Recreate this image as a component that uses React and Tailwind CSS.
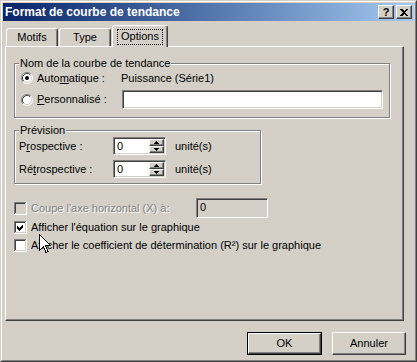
import React from "react";

const raised =
  "border border-t-white border-l-white border-r-[#404040] border-b-[#404040] shadow-[inset_-1px_-1px_0_#808080]";
const sunken =
  "border border-t-[#808080] border-l-[#808080] border-r-white border-b-white shadow-[inset_1px_1px_0_#404040,inset_-1px_-1px_0_#d4d0c8]";
const etched =
  "border border-[#808080] shadow-[1px_1px_0_white,inset_1px_1px_0_white]";

const Radio = ({ checked }) => (
  <svg width="12" height="12" viewBox="0 0 12 12" className="shrink-0">
    <circle cx="6" cy="6" r="5" fill="white" />
    <path d="M2.11 9.89 A5.5 5.5 0 0 1 9.89 2.11" fill="none" stroke="#808080" />
    <path d="M9.89 2.11 A5.5 5.5 0 0 1 2.11 9.89" fill="none" stroke="white" />
    <path d="M2.82 9.18 A4.5 4.5 0 0 1 9.18 2.82" fill="none" stroke="#404040" />
    <path d="M9.18 2.82 A4.5 4.5 0 0 1 2.82 9.18" fill="none" stroke="#d4d0c8" />
    {checked && <circle cx="6" cy="6" r="2" fill="black" />}
  </svg>
);

const Check = ({ checked, disabled }) => (
  <svg width="13" height="13" viewBox="0 0 13 13" shapeRendering="crispEdges" className="shrink-0">
    <rect x="0" y="0" width="13" height="13" fill={disabled ? "#d4d0c8" : "white"} />
    <rect x="0" y="0" width="12" height="1" fill="#808080" />
    <rect x="0" y="0" width="1" height="12" fill="#808080" />
    <rect x="1" y="1" width="10" height="1" fill="#404040" />
    <rect x="1" y="1" width="1" height="10" fill="#404040" />
    <rect x="0" y="12" width="13" height="1" fill="white" />
    <rect x="12" y="0" width="1" height="13" fill="white" />
    <rect x="1" y="11" width="11" height="1" fill="#d4d0c8" />
    <rect x="11" y="1" width="1" height="11" fill="#d4d0c8" />
    {checked && <path d="M3 5 L5 7 L9 3 L9 6 L5 10 L3 8 Z" fill="black" />}
  </svg>
);

const Arrow = ({ up }) => (
  <svg width="5" height="3" viewBox="0 0 5 3" shapeRendering="crispEdges">
    <path d={up ? "M2.5 0 L5 3 L0 3 Z" : "M0 0 L5 0 L2.5 3 Z"} fill="black" />
  </svg>
);

const Spin = () => (
  <div className={`flex w-[53px] h-[18px] bg-white ${sunken} p-[1px]`}>
    <span className="flex-1 pl-[2px] leading-[14px]">0</span>
    <div className="flex flex-col w-[15px]">
      <div className={`h-[7px] flex items-center justify-center bg-[#d4d0c8] ${raised}`}>
        <Arrow up />
      </div>
      <div className={`h-[7px] flex items-center justify-center bg-[#d4d0c8] ${raised}`}>
        <Arrow />
      </div>
    </div>
  </div>
);

const Tab = ({ label, width, selected }) => (
  <div
    className={`flex items-center justify-center rounded-t-[3px] border-t border-l border-r border-t-white border-l-white border-r-[#404040] shadow-[inset_-1px_0_0_#808080] bg-[#d4d0c8] ${width} ${
      selected ? "h-[22px] -mb-[1px] relative z-10" : "h-[18px]"
    }`}
  >
    {selected ? (
      <span className="h-[16px] flex items-center border border-dotted border-black px-[3px]">{label}</span>
    ) : (
      <span>{label}</span>
    )}
  </div>
);

export default function App() {
  return (
    <div className="relative w-[417px] h-[362px] bg-[#d4d0c8] border border-t-[#d4d0c8] border-l-[#d4d0c8] border-r-[#404040] border-b-[#404040] font-['Liberation_Sans',Arial,sans-serif] text-[11px] text-black select-none">
      <div className="h-full border border-t-white border-l-white border-r-[#808080] border-b-[#808080] p-[1px] flex flex-col">
        {/* title bar */}
        <div className="h-[18px] flex items-center bg-gradient-to-r from-[#0a246a] to-[#a6caf0] pl-[2px] pr-[2px]">
          <span className="flex-1 text-white font-bold text-[12px] leading-none">Format de courbe de tendance</span>
          <div className={`w-[16px] h-[14px] flex items-center justify-center bg-[#d4d0c8] ${raised} font-bold text-[11px] leading-none`}>
            ?
          </div>
          <div className={`ml-[2px] w-[16px] h-[14px] flex items-center justify-center bg-[#d4d0c8] ${raised}`}>
            <svg width="8" height="7" viewBox="0 0 8 7" shapeRendering="crispEdges">
              <path d="M0 0 L2 0 L4 2 L6 0 L8 0 L5 3.5 L8 7 L6 7 L4 5 L2 7 L0 7 L3 3.5 Z" fill="black" />
            </svg>
          </div>
        </div>

        <div className="flex flex-col pl-[2px] pt-[4px]">
          {/* tabs */}
          <div className="flex items-end h-[21px] pl-[1px] gap-[1px] relative z-10">
            <Tab label="Motifs" width="w-[52px]" />
            <Tab label="Type" width="w-[52px]" />
            <Tab label="Options" width="w-[56px]" selected />
          </div>

          {/* panel */}
          <div className="w-[399px] h-[275px] border border-t-white border-l-white border-r-[#404040] border-b-[#404040] shadow-[inset_-1px_-1px_0_#808080] flex flex-col pl-[8px]">
            {/* group 1 */}
            <div className={`relative mt-[16px] w-[376px] h-[55px] ${etched} pl-[6px]`}>
              <span className="absolute -top-[7px] left-[4px] bg-[#d4d0c8] px-[1px] leading-[13px]">
                Nom de la courbe de tendance
              </span>
              <div className="mt-[6px] h-[16px] flex items-center">
                <div className="w-[100px] flex items-center gap-[4px]">
                  <Radio checked />
                  <span>
                    Auto<u>m</u>atique :
                  </span>
                </div>
                <span>Puissance (Série1)</span>
              </div>
              <div className="mt-[4px] h-[19px] flex items-center">
                <div className="w-[101px] flex items-center gap-[4px]">
                  <Radio />
                  <span>
                    <u>P</u>ersonnalisé :
                  </span>
                </div>
                <div className={`w-[261px] h-[19px] bg-white ${sunken}`} />
              </div>
            </div>

            {/* group 2 */}
            <div className={`relative mt-[12px] w-[247px] h-[54px] ${etched} pl-[4px]`}>
              <span className="absolute -top-[7px] left-[4px] bg-[#d4d0c8] px-[1px] leading-[13px]">Prévision</span>
              <div className="mt-[6px] flex items-center">
                <span className="w-[94px]">
                  P<u>r</u>ospective :
                </span>
                <Spin />
                <span className="ml-[9px]">unité(s)</span>
              </div>
              <div className="mt-[5px] flex items-center">
                <span className="w-[94px]">
                  Ré<u>t</u>rospective :
                </span>
                <Spin />
                <span className="ml-[9px]">unité(s)</span>
              </div>
            </div>

            {/* checkboxes */}
            <div className="mt-[14px] h-[20px] flex items-center">
              <div className="w-[182px] flex items-center gap-[4px]">
                <Check disabled />
                <span className="text-[#808080] [text-shadow:1px_1px_0_white]">Coupe l'axe horizontal (X) à:</span>
              </div>
              <div className={`w-[72px] h-[20px] ${sunken} pl-[3px] leading-[16px]`}>0</div>
            </div>
            <div className="h-[18px] flex items-center gap-[4px]">
              <Check checked />
              <span>Afficher l'équation sur le graphique</span>
            </div>
            <div className="h-[18px] flex items-center gap-[4px]">
              <Check />
              <span>Afficher le coefficient de détermination (R²) sur le graphique</span>
            </div>
          </div>

          {/* buttons */}
          <div className="mt-[11px] flex justify-end gap-[10px] pr-[8px]">
            <div className="w-[75px] h-[23px] border border-black">
              <div className={`h-full flex items-center justify-center ${raised}`}>OK</div>
            </div>
            <div className={`w-[74px] h-[23px] flex items-center justify-center ${raised}`}>Annuler</div>
          </div>
        </div>
      </div>

      {/* mouse pointer */}
      <svg
        className="absolute left-[38px] top-[233px]"
        width="12"
        height="20"
        viewBox="0 0 12 20"
        shapeRendering="crispEdges"
      >
        <path d="M0.5 0.5 L0.5 16.5 L4.5 12.5 L7 18.5 L9 17.5 L6.5 11.5 L11.5 11.5 Z" fill="white" stroke="black" />
      </svg>
    </div>
  );
}
